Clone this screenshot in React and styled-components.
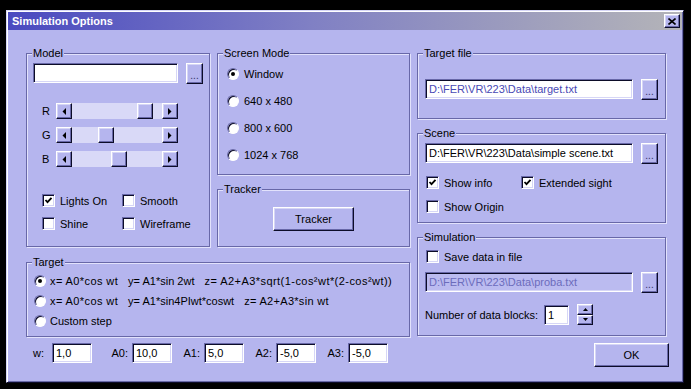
import React from "react";
import styled, { createGlobalStyle } from "styled-components";

const FACE = "#b5b5ee";
const SHADOW = "#6868a8";
const DARK = "#0c0c28";
const LIGHT = "#d6d6f6";

const Global = createGlobalStyle`
  html, body { margin: 0; padding: 0; background: #000; min-height: 100%; }
  body { font-family: "Liberation Sans", Arial, sans-serif; font-size: 11px; color: #000; }
  #root { padding: 10px 0 0 6px; }
`;

const Window = styled.div`
  box-sizing: border-box;
  width: 678px;
  height: 373px;
  padding: 1px;
  background: ${FACE};
  border: 1px solid;
  border-color: ${LIGHT} ${DARK} ${DARK} ${LIGHT};
  box-shadow: inset 1px 1px 0 #fff, inset -1px -1px 0 ${SHADOW};
  display: flex;
  flex-direction: column;
`;

const TitleBar = styled.div`
  height: 18px;
  flex: none;
  display: flex;
  align-items: center;
  padding: 0 2px 0 4px;
  background: linear-gradient(90deg, #4a4ac0 0%, #8080c4 45%, #b4b4b8 100%);
  color: #fff;
  font-weight: bold;
  font-size: 11px;
`;

const raised = `
  box-sizing: border-box;
  background: ${FACE};
  border: 1px solid;
  border-color: #fff ${DARK} ${DARK} #fff;
  box-shadow: inset -1px -1px 0 ${SHADOW}, inset 1px 1px 0 ${LIGHT};
`;

const sunken = `
  box-sizing: border-box;
  border: 1px solid;
  border-color: ${SHADOW} #fff #fff ${SHADOW};
  box-shadow: inset 1px 1px 0 ${DARK}, inset -1px -1px 0 ${LIGHT};
`;

const CloseButton = styled.div`
  ${raised}
  margin-left: auto;
  width: 16px;
  height: 14px;
  display: flex;
  align-items: center;
  justify-content: center;
`;

const Body = styled.div`
  padding: 17px 16px 0 18px;
  display: flex;
  flex-direction: column;
`;

const Main = styled.div`
  display: flex;
  gap: 7px;
  align-items: flex-start;
`;

const LeftArea = styled.div`
  width: 384px;
  display: flex;
  flex-direction: column;
  gap: 9px;
`;

const TopRow = styled.div`
  display: flex;
  gap: 7px;
  align-items: flex-start;
`;

const Column = styled.div`
  width: ${(p) => p.$w}px;
  display: flex;
  flex-direction: column;
  gap: 8px;
`;

const Group = styled.fieldset`
  box-sizing: border-box;
  margin: 0;
  padding: 0 6px;
  min-width: 0;
  width: ${(p) => p.$w}px;
  height: ${(p) => p.$h}px;
  border: 1px solid ${SHADOW};
  box-shadow: inset 1px 1px 0 #e2e2fc, 1px 1px 0 #e2e2fc;
`;

const Legend = styled.legend`
  padding: 0 1px;
  margin-left: -1px;
  line-height: 13px;
  font-size: 11px;
  background: ${FACE};
`;

const Field = styled.div`
  ${sunken}
  width: ${(p) => p.$w}px;
  height: 20px;
  flex: none;
  background: ${(p) => (p.$disabled ? "#bbbbf0" : "#fff")};
  color: ${(p) => p.$color || "#000"};
  padding: 0 3px;
  display: flex;
  align-items: center;
  white-space: nowrap;
  overflow: hidden;
`;

const FileRow = styled.div`
  display: flex;
  gap: 8px;
  align-items: flex-start;
  margin-top: ${(p) => p.$mt}px;
  margin-left: ${(p) => p.$ml || 0}px;
`;

const Browse = styled.div`
  ${raised}
  width: 17px;
  height: 21px;
  flex: none;
  display: flex;
  align-items: flex-end;
  justify-content: center;
  padding-bottom: 3px;
  font-size: 10px;
  line-height: 8px;
  color: #303060;
`;

const Sliders = styled.div`
  margin-top: 19px;
  display: flex;
  flex-direction: column;
  gap: 8px;
`;

const SliderRow = styled.div`
  display: flex;
  align-items: center;
  height: 16px;
`;

const SliderLabel = styled.span`
  width: 14px;
  margin-left: 9px;
`;

const Scroll = styled.div`
  display: flex;
  width: 122px;
  height: 16px;
`;

const ScrollArrow = styled.div`
  ${raised}
  width: 16px;
  height: 16px;
  flex: none;
  display: flex;
  align-items: center;
  justify-content: center;
`;

const Track = styled.div`
  position: relative;
  flex: 1;
  background: #d9d9f7;
`;

const Thumb = styled.div`
  ${raised}
  position: absolute;
  top: 0;
  width: 16px;
  height: 16px;
`;

const CheckGrid = styled.div`
  display: grid;
  grid-template-columns: ${(p) => p.$col}px ${(p) => p.$col}px;
  row-gap: ${(p) => p.$gap}px;
  margin-top: ${(p) => p.$mt}px;
  margin-left: ${(p) => p.$ml}px;
`;

const CheckItem = styled.div`
  display: flex;
  align-items: center;
  gap: 5px;
  height: 13px;
  white-space: nowrap;
  margin-top: ${(p) => p.$mt || 0}px;
  margin-left: ${(p) => p.$ml || 0}px;
`;

const Box = styled.span`
  ${sunken}
  width: 13px;
  height: 13px;
  flex: none;
  background: #fff;
  display: flex;
  align-items: center;
  justify-content: center;
`;

const RadioList = styled.div`
  display: flex;
  flex-direction: column;
  gap: ${(p) => p.$gap}px;
  margin-top: ${(p) => p.$mt}px;
  padding-left: ${(p) => p.$pl}px;
`;

const RadioRow = styled.div`
  display: flex;
  align-items: center;
  gap: ${(p) => p.$gap}px;
  height: 16px;
  white-space: pre;
`;

const RadioDot = styled.span`
  box-sizing: border-box;
  width: 12px;
  height: 12px;
  flex: none;
  border-radius: 50%;
  background: #fff;
  border: 1px solid;
  border-color: ${SHADOW} #fff #fff ${SHADOW};
  box-shadow: inset 1px 1px 0 ${DARK};
  display: flex;
  align-items: center;
  justify-content: center;
  &::after {
    content: "";
    width: 4px;
    height: 4px;
    border-radius: 50%;
    background: #000;
    display: ${(p) => (p.$on ? "block" : "none")};
  }
`;

const Formula = styled.span`
  display: flex;
`;

const Term = styled.span`
  margin-right: 10px;
  letter-spacing: ${(p) => p.$ls || 0}px;
`;

const PushButton = styled.div`
  ${raised}
  width: ${(p) => p.$w}px;
  height: 24px;
  display: flex;
  align-items: center;
  justify-content: center;
  font-size: 11px;
`;

const CenterButton = styled(PushButton)`
  margin: 11px auto 0;
`;

const NumberRow = styled.div`
  display: flex;
  align-items: center;
  margin-top: 11px;
  margin-left: 1px;
`;

const NumberLabel = styled.span`
  width: 119px;
`;

const Spin = styled.div`
  display: flex;
  flex-direction: column;
  width: 16px;
  height: 21px;
  margin-left: 8px;
`;

const SpinBtn = styled.div`
  ${raised}
  flex: 1;
  display: flex;
  align-items: center;
  justify-content: center;
`;

const BottomRow = styled.div`
  display: flex;
  align-items: flex-start;
  margin-top: 6px;
`;

const Param = styled.div`
  width: ${(p) => p.$w}px;
  display: flex;
  align-items: center;
  justify-content: flex-end;
  gap: ${(p) => p.$gap}px;
  height: 20px;
`;

const OkButton = styled(PushButton)`
  margin-left: auto;
  margin-right: -3px;
`;

const Arrow = ({ dir }) => (
  <svg width="4" height="7" viewBox="0 0 4 7">
    <polygon points={dir === "left" ? "4,0 4,7 0.5,3.5" : "0,0 0,7 3.5,3.5"} fill="#000" />
  </svg>
);

const SmallArrow = ({ up }) => (
  <svg width="5" height="3" viewBox="0 0 5 3">
    <polygon points={up ? "2.5,0 5,3 0,3" : "0,0 5,0 2.5,3"} fill="#000" />
  </svg>
);

const CheckMark = () => (
  <svg width="9" height="9" viewBox="0 0 9 9">
    <polyline points="1.5,4 3.5,6.2 7.5,1.8" fill="none" stroke="#000" strokeWidth="1.8" />
  </svg>
);

const Slider = ({ label, value }) => (
  <SliderRow>
    <SliderLabel>{label}</SliderLabel>
    <Scroll>
      <ScrollArrow>
        <Arrow dir="left" />
      </ScrollArrow>
      <Track>
        <Thumb style={{ left: `${value}px` }} />
      </Track>
      <ScrollArrow>
        <Arrow dir="right" />
      </ScrollArrow>
    </Scroll>
  </SliderRow>
);

const Check = ({ on, children, ...rest }) => (
  <CheckItem {...rest}>
    <Box>{on && <CheckMark />}</Box>
    <span>{children}</span>
  </CheckItem>
);

const Radio = ({ on, gap, children }) => (
  <RadioRow $gap={gap}>
    <RadioDot $on={on} />
    <span>{children}</span>
  </RadioRow>
);

export default function App() {
  return (
    <>
      <Global />
      <Window>
        <TitleBar>
          <span>Simulation Options</span>
          <CloseButton>
            <svg width="8" height="7" viewBox="0 0 8 7">
              <path d="M0.5 0.5 L7.5 6.5 M7.5 0.5 L0.5 6.5" stroke="#000" strokeWidth="1.6" />
            </svg>
          </CloseButton>
        </TitleBar>
        <Body>
          <Main>
            <LeftArea>
              <TopRow>
                <Group $w={184} $h={200}>
                  <Legend>Model</Legend>
                  <FileRow $mt={3}>
                    <Field $w={145} />
                    <Browse>...</Browse>
                  </FileRow>
                  <Sliders>
                    <Slider label="R" value={65} />
                    <Slider label="G" value={26} />
                    <Slider label="B" value={39} />
                  </Sliders>
                  <CheckGrid $col={80} $gap={10} $mt={27} $ml={9}>
                    <Check on>Lights On</Check>
                    <Check>Smooth</Check>
                    <Check>Shine</Check>
                    <Check>Wireframe</Check>
                  </CheckGrid>
                </Group>
                <Column $w={193}>
                  <Group $w={193} $h={128}>
                    <Legend>Screen Mode</Legend>
                    <RadioList $gap={11} $mt={6} $pl={3}>
                      <Radio on gap={5}>Window</Radio>
                      <Radio gap={5}>640 x 480</Radio>
                      <Radio gap={5}>800 x 600</Radio>
                      <Radio gap={5}>1024 x 768</Radio>
                    </RadioList>
                  </Group>
                  <Group $w={193} $h={64}>
                    <Legend>Tracker</Legend>
                    <CenterButton $w={81}>Tracker</CenterButton>
                  </Group>
                </Column>
              </TopRow>
              <Group $w={384} $h={81}>
                <Legend>Target</Legend>
                <RadioList $gap={4} $mt={4} $pl={1}>
                  <Radio on gap={4}>
                    <Formula>
                      <Term $ls={0.4}>x= A0*cos wt</Term>
                      <Term>y= A1*sin 2wt</Term>
                      <Term $ls={0.45}>z= A2+A3*sqrt(1-cos²wt*(2-cos²wt))</Term>
                    </Formula>
                  </Radio>
                  <Radio gap={4}>
                    <Formula>
                      <Term $ls={0.4}>x= A0*cos wt</Term>
                      <Term>y= A1*sin4PIwt*coswt</Term>
                      <Term $ls={0.3}>z= A2+A3*sin wt</Term>
                    </Formula>
                  </Radio>
                  <Radio gap={4}>Custom step</Radio>
                </RadioList>
              </Group>
            </LeftArea>
            <Column $w={249}>
              <Group $w={249} $h={72}>
                <Legend>Target file</Legend>
                <FileRow $mt={19} $ml={1}>
                  <Field $w={208} $color="#4848b4">D:\FER\VR\223\Data\target.txt</Field>
                  <Browse>...</Browse>
                </FileRow>
              </Group>
              <Group $w={249} $h={96}>
                <Legend>Scene</Legend>
                <FileRow $mt={3} $ml={1}>
                  <Field $w={208}>D:\FER\VR\223\Data\simple scene.txt</Field>
                  <Browse>...</Browse>
                </FileRow>
                <CheckGrid $col={95} $gap={11} $mt={12} $ml={2}>
                  <Check on>Show info</Check>
                  <Check on>Extended sight</Check>
                  <Check>Show Origin</Check>
                </CheckGrid>
              </Group>
              <Group $w={249} $h={105}>
                <Legend>Simulation</Legend>
                <Check $mt={6} $ml={2}>Save data in file</Check>
                <FileRow $mt={9} $ml={1}>
                  <Field $w={208} $disabled $color="#6c6cbc">D:\FER\VR\223\Data\proba.txt</Field>
                  <Browse>...</Browse>
                </FileRow>
                <NumberRow>
                  <NumberLabel>Number of data blocks:</NumberLabel>
                  <Field $w={25}>1</Field>
                  <Spin>
                    <SpinBtn>
                      <SmallArrow up />
                    </SpinBtn>
                    <SpinBtn>
                      <SmallArrow />
                    </SpinBtn>
                  </Spin>
                </NumberRow>
              </Group>
            </Column>
          </Main>
          <BottomRow>
            <Param $w={66} $gap={8}>
              <span>w:</span>
              <Field $w={40}>1,0</Field>
            </Param>
            <Param $w={80} $gap={4}>
              <span>A0:</span>
              <Field $w={40}>10,0</Field>
            </Param>
            <Param $w={72} $gap={4}>
              <span>A1:</span>
              <Field $w={40}>5,0</Field>
            </Param>
            <Param $w={72} $gap={4}>
              <span>A2:</span>
              <Field $w={40}>-5,0</Field>
            </Param>
            <Param $w={72} $gap={4}>
              <span>A3:</span>
              <Field $w={40}>-5,0</Field>
            </Param>
            <OkButton $w={75}>OK</OkButton>
          </BottomRow>
        </Body>
      </Window>
    </>
  );
}
